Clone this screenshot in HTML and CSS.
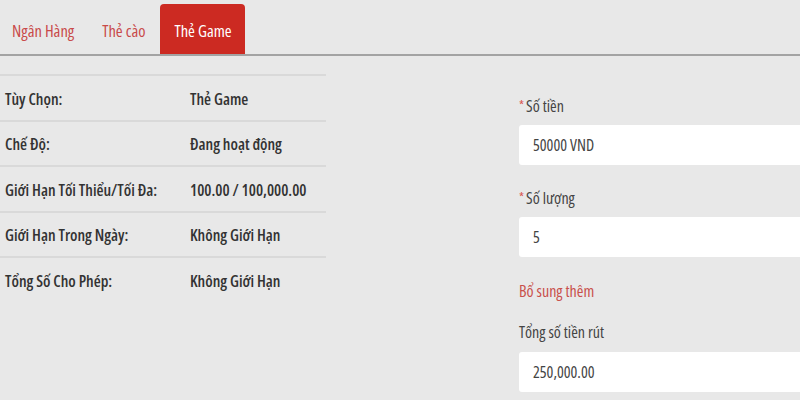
FILE: index.html
```html
<!DOCTYPE html>
<html lang="vi">
<head>
<meta charset="utf-8">
<title>Thẻ Game</title>
<link rel="stylesheet" href="styles.css">
</head>
<body>
<nav class="tabs">
  <a class="tab">Ngân Hàng</a>
  <a class="tab">Thẻ cào</a>
  <a class="tab active">Thẻ Game</a>
</nav>
<main class="content">
  <section class="info">
    <div class="row"><span class="key">Tùy Chọn:</span><span class="val">Thẻ Game</span></div>
    <div class="row"><span class="key">Chế Độ:</span><span class="val">Đang hoạt động</span></div>
    <div class="row"><span class="key">Giới Hạn Tối Thiểu/Tối Đa:</span><span class="val">100.00 / 100,000.00</span></div>
    <div class="row"><span class="key">Giới Hạn Trong Ngày:</span><span class="val">Không Giới Hạn</span></div>
    <div class="row"><span class="key">Tổng Số Cho Phép:</span><span class="val">Không Giới Hạn</span></div>
  </section>
  <section class="form">
    <div class="group">
      <div class="label"><span class="req">*</span>Số tiền</div>
      <div class="input">50000 VND</div>
    </div>
    <div class="group">
      <div class="label"><span class="req">*</span>Số lượng</div>
      <div class="input">5</div>
    </div>
    <div class="section-title">Bổ sung thêm</div>
    <div class="group">
      <div class="label">Tổng số tiền rút</div>
      <div class="input">250,000.00</div>
    </div>
  </section>
</main>
</body>
</html>
```
FILE: styles.css
```css
html, body {
  margin: 0;
  padding: 0;
}
body {
  width: 800px;
  height: 400px;
  overflow: hidden;
  background: #e8e8e8;
  font-family: "Open Sans", "Liberation Sans", sans-serif;
  font-stretch: 78%;
  font-size: 16px;
  color: #333;
}
.tabs {
  display: flex;
  align-items: flex-end;
  height: 51px;
  padding-top: 3px;
  border-bottom: 2px solid #a3a3a3;
}
.tab {
  display: flex;
  align-items: center;
  height: 50px;
  padding: 2px 15px 0 13px;
  box-sizing: border-box;
  color: #c94a4a;
  font-size: 16.5px;
  border-radius: 4px 4px 0 0;
}
.tab:first-child {
  padding-left: 12px;
}
.tab.active {
  background: #cc2a22;
  color: #fff;
  padding-left: 14px;
  padding-right: 13px;
}
.content {
  display: flex;
  padding-top: 18px;
}
.info {
  flex: none;
  width: 326px;
}
.row {
  display: flex;
  align-items: center;
  height: 45.5px;
  box-sizing: border-box;
  padding-top: 2px;
  border-top: 2px solid #d9d9d9;
  font-weight: 600;
  color: #333;
  white-space: nowrap;
}
.key {
  flex: none;
  width: 190px;
  padding-left: 5px;
  box-sizing: border-box;
}
.form {
  margin-left: 193px;
  padding-top: 21px;
  flex: none;
}
.group + .group {
  margin-top: 22px;
}
.label {
  line-height: 20px;
  height: 20px;
  margin-bottom: 10px;
  color: #444;
}
.req {
  color: #d9534f;
  font-size: 13px;
  margin-right: 2px;
  vertical-align: 2px;
}
.input {
  width: 300px;
  height: 40px;
  line-height: 40px;
  padding-left: 14px;
  box-sizing: border-box;
  background: #fff;
  border-radius: 3px;
  color: #444;
}
.section-title {
  margin-top: 24px;
  margin-bottom: 21px;
  line-height: 20px;
  color: #c9504c;
}
```
